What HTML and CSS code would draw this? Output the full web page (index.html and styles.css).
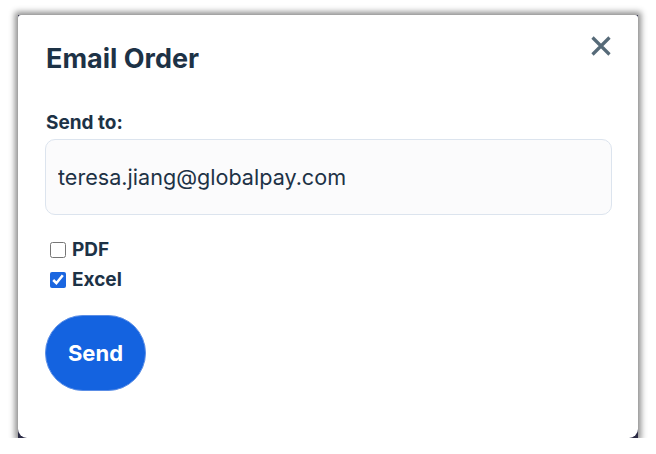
FILE: index.html
```html
<!DOCTYPE html>
<html lang="en">
<head>
<meta charset="utf-8">
<title>Email Order</title>
<link rel="stylesheet" href="styles.css">
</head>
<body>
<div class="backdrop">
  <div class="dialog">
    <div class="dialog-header">
      <h2 class="title">Email Order</h2>
      <button class="close" aria-label="Close">
        <svg width="22" height="22" viewBox="0 0 22 22"><path d="M2.5 2.5 L19.5 19.5 M19.5 2.5 L2.5 19.5" stroke="#566a78" stroke-width="3.2" stroke-linecap="butt" fill="none"/></svg>
      </button>
    </div>
    <label class="field-label" for="email">Send to:</label>
    <input id="email" class="email-input" type="text" value="teresa.jiang@globalpay.com">
    <div class="options">
      <label class="option"><input type="checkbox" class="check"> PDF</label>
      <label class="option"><input type="checkbox" class="check" checked> Excel</label>
    </div>
    <button class="send">Send</button>
  </div>
</div>
</body>
</html>
```
FILE: styles.css
```css
html, body {
  margin: 0;
  padding: 0;
  background: #ffffff;
  font-family: Inter, "Noto Sans", sans-serif;
}
.backdrop {
  margin: 15px 0 0 18px;
  width: 620px;
  height: 423px;
  background: #2b2b45;
  box-shadow: 0 0 6px 3px rgba(0, 0, 0, 0.45);
}
.dialog {
  box-sizing: border-box;
  width: 620px;
  height: 423px;
  background: #ffffff;
  border-radius: 3px 3px 9px 9px;
  padding: 27px 27px 0 27px;
  color: #1d3246;
}
.dialog-header {
  display: flex;
  justify-content: space-between;
  align-items: flex-start;
}
.title {
  margin: 0;
  font-size: 27px;
  line-height: 34px;
  font-weight: 700;
  padding-left: 1px;
}
.close {
  border: 0;
  background: none;
  padding: 0;
  margin: -7px -1px 0 0;
  width: 22px;
  height: 22px;
  cursor: pointer;
}
.field-label {
  display: block;
  margin-top: 36px;
  padding-left: 1px;
  font-size: 19px;
  line-height: 22px;
  font-weight: 700;
}
.email-input {
  display: block;
  box-sizing: border-box;
  width: 567px;
  height: 76px;
  margin-top: 5px;
  padding: 0 12px;
  border: 1px solid #dce4ee;
  border-radius: 10px;
  background: #fbfbfc;
  font-family: Inter, "Noto Sans", sans-serif;
  font-size: 21.6px;
  color: #1d3246;
  outline: none;
}
.options {
  display: flex;
  flex-direction: column;
  gap: 10px;
  margin-top: 25px;
  padding-left: 5px;
}
.option {
  display: flex;
  align-items: center;
  gap: 6px;
  font-size: 19px;
  line-height: 20px;
  font-weight: 700;
}
.check {
  margin: 0;
  width: 16px;
  height: 16px;
  accent-color: #1a66e0;
}
.send {
  display: block;
  margin-top: 25px;
  width: 101px;
  height: 76px;
  border: 1px solid #5b8ee6;
  border-radius: 38px;
  background: #1463e0;
  color: #ffffff;
  font-family: Inter, "Noto Sans", sans-serif;
  font-size: 22px;
  font-weight: 700;
  cursor: pointer;
}
```
